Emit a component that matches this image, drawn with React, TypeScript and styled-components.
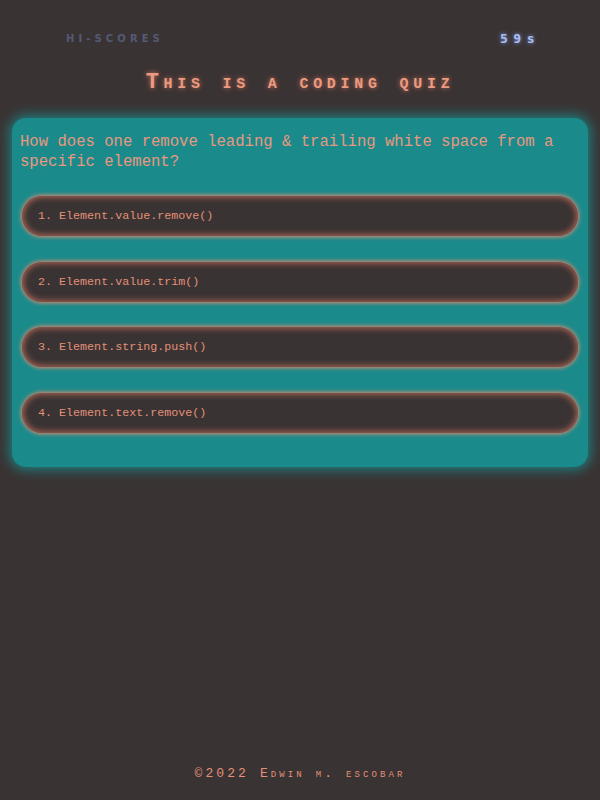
import React from 'react';
import styled, { createGlobalStyle } from 'styled-components';

const GlobalStyle = createGlobalStyle`
  html, body {
    margin: 0;
    padding: 0;
    background: #3a3333;
  }
  * {
    box-sizing: border-box;
  }
`;

const Page = styled.div`
  min-height: 800px;
  display: flex;
  flex-direction: column;
  font-family: 'Liberation Mono', 'Courier New', monospace;
  color: #e39078;
`;

const Header = styled.header`
  display: flex;
  justify-content: space-between;
  align-items: center;
  height: 76px;
  padding: 0 60px 0 66px;
`;

const HiScores = styled.a`
  font-family: 'DejaVu Sans', sans-serif;
  font-weight: bold;
  font-size: 10px;
  letter-spacing: 4.1px;
  color: #545a76;
  text-decoration: none;
`;

const Timer = styled.span`
  font-family: 'DejaVu Sans Mono', monospace;
  font-weight: bold;
  font-size: 13px;
  letter-spacing: 5.5px;
  color: #a9bdf2;
  text-shadow: 0 0 4px #7f95e0;
`;

const Title = styled.h1`
  margin: 0;
  text-align: center;
  font-size: 22px;
  font-weight: bold;
  font-variant: small-caps;
  letter-spacing: 4.7px;
  line-height: 14px;
  color: #ec9a80;
  text-shadow: 0 0 5px #c8705a;
`;

const Card = styled.main`
  margin: 28px 12px 0;
  padding: 14px 8px 34px;
  background: #1a8a8b;
  border-radius: 14px;
  box-shadow: 0 0 12px 3px rgba(26, 138, 139, 0.85);
`;

const Question = styled.p`
  margin: 0 0 24px;
  font-size: 15.6px;
  line-height: 20px;
  color: #e89880;
`;

const Answers = styled.ol`
  list-style: none;
  margin: 0;
  padding: 0 2px;
  display: flex;
  flex-direction: column;
  gap: 25.5px;
`;

const AnswerButton = styled.button`
  width: 100%;
  height: 40px;
  border: none;
  border-radius: 20px;
  background: #3a3333;
  padding: 0 16px;
  text-align: left;
  font-family: 'Liberation Mono', 'Courier New', monospace;
  font-size: 11.7px;
  color: #e39078;
  box-shadow: 0 0 4px 1px #d98a70, inset 0 0 6px 1px #b86a58;
  cursor: pointer;
`;

const Footer = styled.footer`
  margin-top: auto;
  height: 34px;
  text-align: center;
  font-size: 13px;
  font-variant: small-caps;
  letter-spacing: 3.1px;
  color: #e39078;
`;

const answers = [
  'Element.value.remove()',
  'Element.value.trim()',
  'Element.string.push()',
  'Element.text.remove()',
];

export default function App() {
  return (
    <Page>
      <GlobalStyle />
      <Header>
        <HiScores href="#">HI-SCORES</HiScores>
        <Timer>59s</Timer>
      </Header>
      <Title>This is a coding quiz</Title>
      <Card>
        <Question>
          How does one remove leading &amp; trailing white space from a specific element?
        </Question>
        <Answers>
          {answers.map((a, i) => (
            <li key={a}>
              <AnswerButton>
                {i + 1}. {a}
              </AnswerButton>
            </li>
          ))}
        </Answers>
      </Card>
      <Footer>©2022 Edwin m. escobar</Footer>
    </Page>
  );
}
